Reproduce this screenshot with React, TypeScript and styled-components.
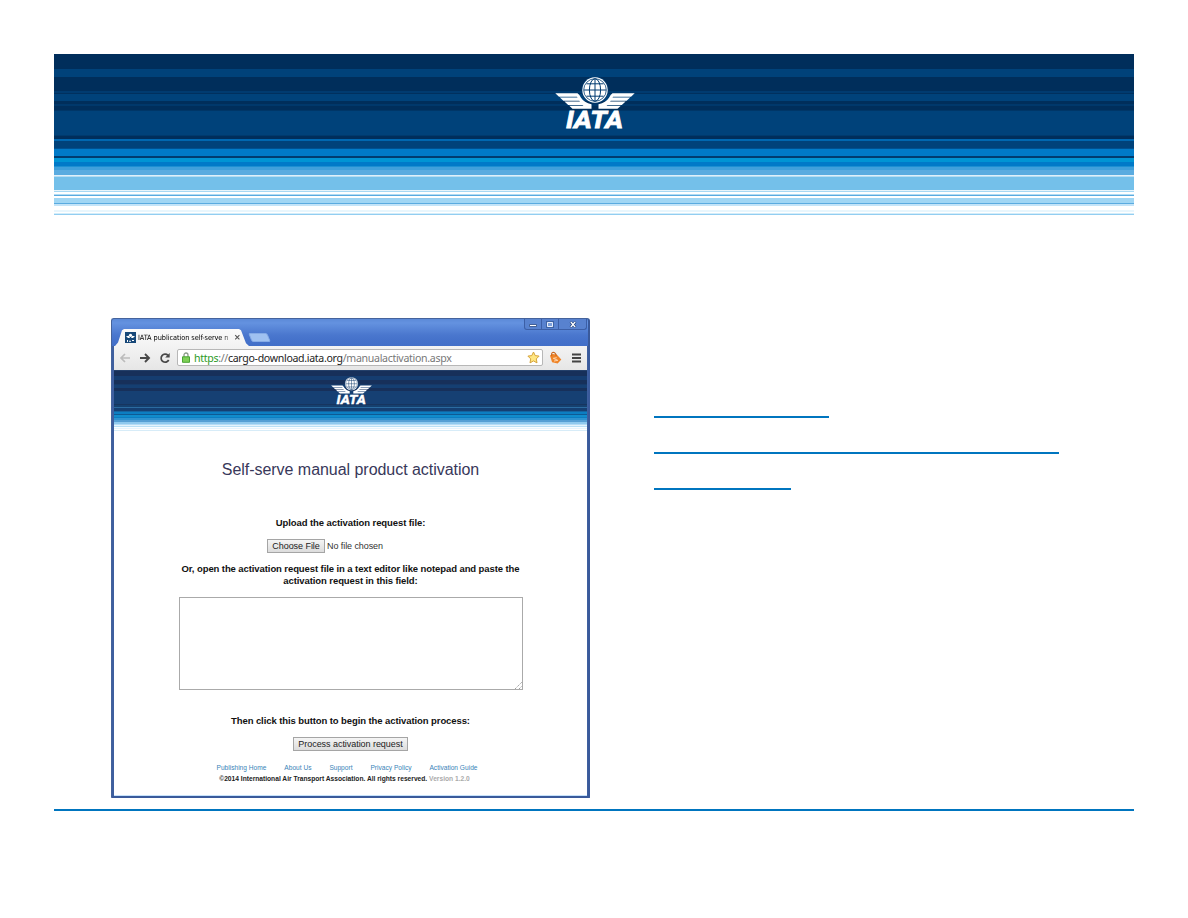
import React from 'react';
import styled, { createGlobalStyle } from 'styled-components';

const Global = createGlobalStyle`
  *, *::before, *::after { box-sizing: border-box; }
  body { margin: 0; background: #fff; font-family: "Liberation Sans", Arial, sans-serif; }
`;

type Stripe = [string, number];

const bannerStripes: Stripe[] = [
  ['#002e5b', 15], ['#00427a', 8], ['#002e5b', 14], ['#003b70', 2], ['#00305e', 1], ['#00427a', 7],
  ['#002e5b', 3], ['#00386b', 2], ['#002e5b', 4], ['#003667', 1], ['#00427a', 24], ['#003a6d', 1],
  ['#002e5b', 3], ['#0067b0', 2], ['#00427a', 7], ['#005090', 1], ['#007ac8', 7], ['#003c70', 2],
  ['#0094d4', 4], ['#0079c8', 4], ['#1c8fd2', 1], ['#3f9fdb', 3], ['#5aabe0', 5], ['#e0f0fa', 1],
  ['#b4dcf3', 1], ['#74c0ea', 13], ['#e8f5fc', 1], ['#a6d8f4', 1], ['#ffffff', 2], ['#b2dcf4', 1],
  ['#5aabe0', 1], ['#ffffff', 2], ['#a0d6f4', 5], ['#5aabe0', 1], ['#c4e4f8', 2], ['#ffffff', 4],
  ['#e8f6fd', 2], ['#ffffff', 1], ['#d3edfa', 1], ['#93cef1', 1],
];

const siteStripes: Stripe[] = [
  ['#24406a', 1], ['#17305a', 5], ['#153d70', 4], ['#17305a', 4], ['#163968', 1], ['#153f72', 3],
  ['#17305a', 3], ['#164073', 13], ['#17355f', 1], ['#15406f', 2], ['#2b6ba0', 1], ['#153f72', 3],
  ['#1464a0', 1], ['#0c7ec2', 2], ['#0e5a94', 1], ['#118ccc', 2], ['#0c7ec2', 1], ['#2f93d0', 2],
  ['#559fd4', 2], ['#8fc9ee', 2], ['#b5dcf5', 1], ['#e4f4fd', 1], ['#b9dff5', 1], ['#fafdff', 1],
  ['#e6f4fc', 1], ['#ffffff', 1], ['#d7ecf8', 1],
];

const stops = (stripes: Stripe[]) => {
  let y = 0;
  return stripes.map(([c, h]) => { const s = `${c} ${y}px ${y + h}px`; y += h; return s; }).join(', ');
};

const Slide = styled.main`
  width: 1188px; height: 918px; padding: 54px 54px 0; background: #fff; overflow: hidden;
`;
const Banner = styled.header<{ $h: number; $stripes: Stripe[]; $top: number }>`
  height: ${p => p.$h}px; padding: ${p => p.$top}px 0 0 1px; flex: none;
  display: flex; justify-content: center; align-items: flex-start;
  background: linear-gradient(to bottom, ${p => stops(p.$stripes)}, #fff 0);
`;
const Columns = styled.section`
  display: flex; height: 596px; padding: 103px 0 0 57px; border-bottom: 2px solid #0075bf;
`;
const Rules = styled.div`
  display: flex; flex-direction: column; gap: 34px; margin: 98px 0 0 64px;
`;
const Rule = styled.div<{ $w: number }>`
  width: ${p => p.$w}px; height: 2px; background: #0075bf;
`;
const Window = styled.div`
  width: 479px; height: 480px; display: flex; flex-direction: column; overflow: hidden;
  background: #3e5f9f; border: 1px solid #45639c; border-bottom: 2px solid #3a5a9b; border-right: 2px solid #3a5a9b;
  border-radius: 3px 3px 1px 1px;
`;
const TitleBar = styled.div`
  height: 27px; display: flex; align-items: flex-end; padding: 0 1px 0 3px; flex: none;
  background: linear-gradient(#5c8ad8 0, #6492e0 4px, #4a77ce 16px, #4471ca 22px, #426fc8 27px);
`;
const Tab = styled.div`
  width: 134px; height: 17px; display: flex; align-items: center; padding: 0 0 0 10px;
  background: linear-gradient(#fafafa, #f3f3f3);
  clip-path: polygon(0 100%, 3px 80%, 7px 8%, 9px 0, 124px 0, 126px 8%, 131px 84%, 134px 100%);
`;
const TabTitle = styled.span`
  width: 96px; margin-left: 2px; white-space: nowrap;
  font: 7.3px/12px "DejaVu Sans Condensed", "DejaVu Sans", sans-serif; font-stretch: condensed; letter-spacing: -0.06px; color: #000;
  mask-image: linear-gradient(to right, #000 84px, transparent 98px);
`;
const NewTab = styled.div`
  width: 19px; height: 9px; margin: 0 0 4px 1px; background: #9fc1f1; border: 1px solid #86abe6;
  transform: skewX(22deg); border-radius: 2px;
`;
const Controls = styled.div`
  margin-left: auto; align-self: flex-start; display: flex; height: 11px;
  border: 1px solid #3c5fa6; border-top: 0; border-radius: 0 0 3px 3px; background: #5882cf;
`;
const Control = styled.div<{ $w: number }>`
  width: ${p => p.$w}px; display: flex; align-items: center; justify-content: center;
  & + & { border-left: 1px solid #3c5fa6; }
`;
const Body = styled.div`
  flex: 1; margin: 0 1px 0 2px; background: #fff; display: flex; flex-direction: column; border-bottom: 1px solid #c6e2fb;
`;
const Toolbar = styled.div`
  height: 24px; flex: none; display: flex; align-items: center; padding: 0 5px 1px;
  background: linear-gradient(#f3f3f3, #e6e6e6);
`;
const Nav = styled.div`
  width: 58px; display: flex; justify-content: space-between; padding-right: 6px;
`;
const Address = styled.div`
  width: 366px; height: 17px; display: flex; align-items: center; padding: 0 2px 0 4px;
  background: #fff; border: 1px solid #b7b7b7; border-radius: 2px;
`;
const Url = styled.span`
  margin-left: 4px; flex: 1; white-space: nowrap; font: 10.6px/14px "Noto Sans", sans-serif; letter-spacing: -0.32px; color: #777;
`;
const Secure = styled.span`color: #2b9a24;`;
const Host = styled.span`color: #222;`;
const Extras = styled.div`
  display: flex; flex: 1; justify-content: space-between; align-items: center; padding: 0 0 0 6px;
`;
const Form = styled.div`
  display: flex; flex-direction: column; align-items: center; white-space: nowrap;
`;
const Title = styled.h1`
  margin: 28px 0 0; font: 400 16px/20px "Liberation Sans", Arial, sans-serif; color: #38385a; letter-spacing: -0.04px;
`;
const Label = styled.p<{ $top: number }>`
  margin: ${p => p.$top}px 0 0; font: 700 9.5px/12px "Liberation Sans", Arial, sans-serif;
  color: #111; text-align: center; letter-spacing: -0.09px;
`;
const FileRow = styled.div`
  display: flex; align-items: center; gap: 2px; margin: 10px 51px 0 0;
`;
const Button = styled.button<{ $w: number; $top?: number }>`
  width: ${p => p.$w}px; height: 14px; margin: ${p => p.$top ?? 0}px 0 0; padding: 0; border: 1px solid #a5a5a5;
  background: linear-gradient(#f5f5f5, #dcdcdc);
  font: 9px/11px "Liberation Sans", Arial, sans-serif; color: #222; white-space: nowrap; letter-spacing: -0.05px;
`;
const FileName = styled.span`
  font-size: 9px; line-height: 14px; color: #333; letter-spacing: -0.08px;
`;
const Paste = styled.div`
  width: 344px; height: 93px; margin-top: 10px; border: 1px solid #aaa;
  display: flex; align-items: flex-end; justify-content: flex-end;
`;
const Links = styled.nav`
  width: 261px; margin: 12px 7px 0 0; display: flex; justify-content: space-between;
`;
const Link = styled.a`
  font-size: 6.6px; line-height: 10px; color: #3984b8;
`;
const Copyright = styled.p`
  margin: 1px 12px 0 0; font-size: 6.67px; line-height: 10px; font-weight: 700; color: #222;
`;
const Version = styled.span`color: #aaa;`;
const LogoSvg = styled.svg`overflow: visible;`;
const LogoText = styled.text`
  font: italic 700 24px Roboto, "Liberation Sans", sans-serif; fill: #fff;
`;

function Logo({ w, h, stroke }: { w: number; h: number; stroke: string }) {
  return (
    <LogoSvg width={w} height={h} viewBox="0 0 80 54" preserveAspectRatio="none">
      <g fill="#fff">
        <path d="M0.3 16.3H22.5Q24.5 17.5 26 20.8Q29 25.6 36.5 27.3V31.7H17.5L14.2 28.8H28.5L27.5 28H13.2L9.4 24.6H25L24.2 23.8H8.4L4.8 20.5H22.5L22 19.7H4Z" />
        <path d="M79.7 16.3H57.5Q55.5 17.5 54 20.8Q51 25.6 43.5 27.3V31.7H62.5L65.8 28.8H51.5L52.5 28H66.8L70.6 24.6H55L55.8 23.8H71.6L75.2 20.5H57.5L58 19.7H76Z" />
      </g>
      <circle cx="40" cy="13" r="13.6" fill={stroke} />
      <circle cx="40" cy="13" r="12.7" fill="#fff" />
      <g fill="none" stroke={stroke} strokeWidth="1">
        <circle cx="40" cy="13" r="11.3" strokeWidth="0.8" />
        <ellipse cx="40" cy="13" rx="5.6" ry="11.3" />
        <path d="M40 2V24M29 13H51M31.5 6.8H48.5M31.5 19.2H48.5" />
      </g>
      <LogoText x="11" y="51.3" textLength="57" lengthAdjust="spacingAndGlyphs" stroke="#fff" strokeWidth="0.8">IATA</LogoText>
    </LogoSvg>
  );
}

export default function App() {
  return (
    <>
      <Global />
      <Slide>
        <Banner $h={161} $top={23} $stripes={bannerStripes}><Logo w={80} h={54} stroke="#003b70" /></Banner>
        <Columns>
          <Window>
            <TitleBar>
              <Tab>
                <svg width="11" height="11" viewBox="0 0 11 11">
                  <path fill="#174878" d="M0 0h11v11H0z" />
                  <path fill="#fff" d="M1 4h3l1 2H3zm9 0H7L6 6h2zM2 8h1v2H2zm2 2l1-2 1 2zm3-2h2v1H7z" />
                  <circle cx="5.5" cy="3.3" r="1.6" fill="#fff" />
                </svg>
                <TabTitle>IATA publication self-serve n</TabTitle>
                <svg width="7" height="7" viewBox="0 0 7 7"><path d="M1.2 1.2l4.2 4.2M5.4 1.2L1.2 5.4" stroke="#555" strokeWidth="1.1" /></svg>
              </Tab>
              <NewTab />
              <Controls>
                <Control $w={16}><svg width="8" height="8"><path d="M.5 4.5h7v2h-7z" fill="#fff" stroke="#294981" strokeWidth=".8" /></svg></Control>
                <Control $w={17}><svg width="8" height="7"><path d="M1.5 1.5h5v4h-5z" fill="#7da0dc" stroke="#e8effb" /><path d="M.4.4h7.2v6.2H.4z" fill="none" stroke="#294981" strokeWidth=".6" /></svg></Control>
                <Control $w={28}><svg width="8" height="7"><path d="M1.5 .8l5 5.4M6.5 .8L1.5 6.2" stroke="#294981" strokeWidth="2.6" /><path d="M1.8 1l4.4 5M6.2 1L1.8 6" stroke="#fff" strokeWidth="1.2" /></svg></Control>
              </Controls>
            </TitleBar>
            <Body>
              <Toolbar>
                <Nav>
                  <svg width="12" height="12" viewBox="0 0 12 12"><path d="M6 2L2 6l4 4M2 6h9" fill="none" stroke="#bcbcbc" strokeWidth="1.7" /></svg>
                  <svg width="12" height="12" viewBox="0 0 12 12"><path d="M6 2l4 4-4 4M10 6H1" fill="none" stroke="#484848" strokeWidth="1.9" /></svg>
                  <svg width="12" height="12" viewBox="0 0 12 12"><path d="M9 3.4A4 4 0 1 0 9.7 8" fill="none" stroke="#484848" strokeWidth="1.7" /><path d="M10.7 1v4.6H6.2z" fill="#484848" /></svg>
                </Nav>
                <Address>
                  <svg width="8" height="11" viewBox="0 0 8 11"><path d="M2 5V3a2 2 0 0 1 4 0v2" fill="none" stroke="#8a9a88" strokeWidth="1.3" /><path d="M.5 4.8h7v5.5h-7z" fill="#7dcf55" stroke="#4aa334" /></svg>
                  <Url><Secure>https</Secure>://<Host>cargo-download.iata.org</Host>/manualactivation.aspx</Url>
                  <svg width="13" height="13" viewBox="0 0 13 13"><path d="M6.5 1l1.7 3.6 3.9.5-2.8 2.8.7 4-3.5-2-3.5 2 .7-4L.9 5.1l3.9-.5z" fill="#ffe681" stroke="#d5a33c" /></svg>
                </Address>
                <Extras>
                  <svg width="13" height="14" viewBox="0 0 13 14"><path d="M1 4.6L3.5 3l4.2.4 4.6 5-3.6 4-5.6-1.2z" fill="#ef8428" /><path d="M2.8 5Q2 1.6 4.2 1.2Q6.4 1.2 7.4 4.8" fill="none" stroke="#c9661c" strokeWidth="1.1" /><path d="M4.3 7.3l3.4-.6M5 10l3.8-.6M4.3 7.3l4.5 2" stroke="#ffe0bd" strokeWidth=".9" /></svg>
                  <svg width="10" height="10"><path d="M0 1.5h9M0 5h9M0 8.5h9" stroke="#444" strokeWidth="1.9" /></svg>
                </Extras>
              </Toolbar>
              <Banner $h={62} $top={7} $stripes={siteStripes}><Logo w={41} h={28} stroke="#174070" /></Banner>
              <Form>
                <Title>Self-serve manual product activation</Title>
                <Label $top={37}>Upload the activation request file:</Label>
                <FileRow><Button $w={58}>Choose File</Button><FileName>No file chosen</FileName></FileRow>
                <Label $top={10}>Or, open the activation request file in a text editor like notepad and paste the<br />activation request in this field:</Label>
                <Paste><svg width="7" height="7"><path d="M0 7L7 0M4 7l3-3" stroke="#888" strokeWidth=".8" strokeDasharray="1.4 .8" /></svg></Paste>
                <Label $top={25}>Then click this button to begin the activation process:</Label>
                <Button $w={115} $top={10}>Process activation request</Button>
                <Links><Link>Publishing Home</Link><Link>About Us</Link><Link>Support</Link><Link>Privacy Policy</Link><Link>Activation Guide</Link></Links>
                <Copyright>©2014 International Air Transport Association. All rights reserved. <Version>Version 1.2.0</Version></Copyright>
              </Form>
            </Body>
          </Window>
          <Rules><Rule $w={175} /><Rule $w={405} /><Rule $w={137} /></Rules>
        </Columns>
      </Slide>
    </>
  );
}
